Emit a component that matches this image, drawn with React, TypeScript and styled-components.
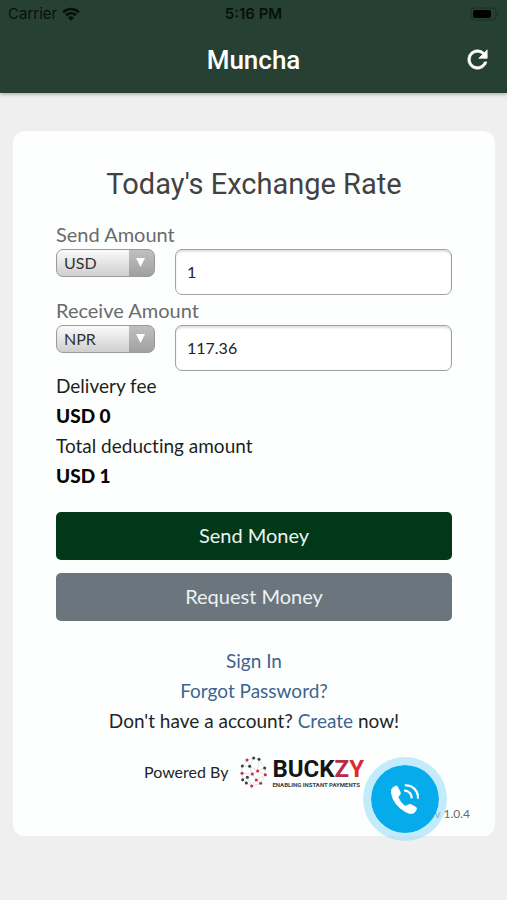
import React, { useState } from "react";
import styled, { createGlobalStyle } from "styled-components";

const GlobalStyle = createGlobalStyle`
  *, *::before, *::after { box-sizing: border-box; }
  body {
    margin: 0;
    background: #efeff0;
    font-family: Lato, "Open Sans", sans-serif;
    font-variant-ligatures: none;
    color: #212529;
  }
  button, input, select { font-family: inherit; }
`;

const Header = styled.header`
  background: #264133;
  box-shadow: 0 1px 4px rgba(0, 0, 0, 0.35);
`;

const StatusBar = styled.div`
  display: grid;
  grid-template-columns: 1fr auto 1fr;
  align-items: center;
  height: 28px;
  padding: 0 8px;
  color: #07100b;
  font: 500 15px/28px Inter, sans-serif;
`;

const Carrier = styled.span`
  display: flex;
  align-items: center;
  gap: 5px;
  font-weight: 400;
`;

const Clock = styled.time`
  font-weight: 600;
`;

const BatteryIcon = styled.svg`
  justify-self: end;
`;

const TitleBar = styled.div`
  display: grid;
  grid-template-columns: 1fr auto 1fr;
  align-items: center;
  height: 65px;
  padding: 0 15px 2px;
`;

const AppTitle = styled.h1`
  grid-column: 2;
  margin: 0;
  color: #fff;
  font: 500 26px/32px Roboto, sans-serif;
`;

const IconButton = styled.button`
  justify-self: end;
  display: flex;
  padding: 0;
  border: 0;
  background: none;
  color: #fff;
  cursor: pointer;
`;

const Card = styled.main`
  margin: 38px 12px 0 13px;
  padding: 33px 43px 13px;
  border-radius: 12px;
  background: #fdfffe;
`;

const Heading = styled.h2`
  margin: 0 0 17px;
  color: #424244;
  text-align: center;
  font: 400 29px/40px Roboto, sans-serif;
`;

const Fields = styled.div`
  display: grid;
  gap: 2px;
`;

const Field = styled.div`
  display: grid;
  grid-template-columns: 99px 1fr;
  gap: 2px 20px;
  align-items: start;
`;

const FieldLabel = styled.label`
  grid-column: 1 / -1;
  color: #6a6b6d;
  font-size: 20px;
  line-height: 26px;
`;

const SelectWrap = styled.div`
  position: relative;
`;

const Select = styled.select`
  display: block;
  width: 100%;
  height: 28px;
  padding: 0 34px 2px 7px;
  appearance: none;
  border: 1px solid #999b9b;
  border-radius: 7px;
  background:
    linear-gradient(#c0c0c1, #a0a0a2) right / 25px 100% no-repeat,
    linear-gradient(#fafafa, #cfcfcf);
  color: #333;
  font-size: 16px;
`;

const SelectArrow = styled.svg`
  position: absolute;
  top: 9px;
  right: 10px;
  pointer-events: none;
`;

const AmountInput = styled.input`
  width: 100%;
  height: 46px;
  padding: 0 11px 2px;
  border: 1px solid #a0a2a2;
  border-radius: 7px;
  background: #fff;
  box-shadow: inset 0 2px 2px rgba(0, 0, 0, 0.12);
  color: #222;
  font-size: 16px;
`;

const Summary = styled.dl`
  margin: 0 0 21px;
  font-size: 19px;
  line-height: 30px;
`;

const Term = styled.dt`
  color: #1d1f20;
`;

const Amount = styled.dd`
  margin: 0;
  color: #050505;
  font-weight: 900;
`;

const Actions = styled.div`
  display: grid;
  gap: 13px;
`;

const ActionButton = styled.button<{ $tone: "primary" | "secondary" }>`
  height: 48px;
  padding: 0 16px 2px;
  border: 0;
  border-radius: 5px;
  background: ${({ $tone }) => ($tone === "primary" ? "#003818" : "#6b757e")};
  color: #eef2f0;
  font-size: 20px;
  cursor: pointer;
`;

const Links = styled.nav`
  display: grid;
  justify-items: center;
  margin-top: 25px;
  font-size: 19px;
  line-height: 30px;
`;

const Link = styled.a`
  color: #3e6491;
  text-decoration: none;
`;

const Prompt = styled.p`
  margin: 0;
`;

const PoweredBy = styled.footer`
  display: flex;
  align-items: center;
  justify-content: center;
  gap: 12px;
  margin-top: 19px;
  font-size: 16px;
  line-height: 30px;
`;

const Brand = styled.span`
  display: flex;
  align-items: center;
  gap: 5px;
`;

const BrandText = styled.span`
  display: grid;
`;

const BrandName = styled.span`
  color: #151517;
  font: 700 24px/26px Roboto, sans-serif;
`;

const BrandLetter = styled.span<{ $color: string }>`
  color: ${({ $color }) => $color};
`;

const Tagline = styled.span`
  color: #3c3c3e;
  font: 700 6px/6px Roboto, sans-serif;
`;

const Version = styled.p`
  margin: 17px -18px 0 0;
  color: #66686a;
  text-align: right;
  font-size: 12px;
  line-height: 18px;
`;

const CallButton = styled.button`
  position: fixed;
  right: 60px;
  bottom: 59px;
  display: grid;
  place-items: center;
  width: 84px;
  height: 84px;
  border: 8px solid rgba(158, 225, 249, 0.62);
  border-radius: 50%;
  background: #05abeb;
  background-clip: padding-box;
  cursor: pointer;
`;

const dots: [number, number, string][] = [
  [41, 11, "#343d4c"], [57, 15, "#343d4c"], [21, 17, "#bb3150"],
  [7, 35, "#343d4c"], [29, 36, "#343d4c"], [74, 41, "#343d4c"],
  [53, 50, "#c92f46"], [76, 61, "#bb3150"], [6, 57, "#bb3150"],
  [37, 59, "#c92f46"], [22, 69, "#343d4c"], [8, 76, "#343d4c"],
  [49, 77, "#c92f46"], [19, 86, "#343d4c"], [62, 87, "#bb3150"],
  [35, 95, "#c92f46"],
];

function BuckzyMark() {
  return (
    <svg width="27" height="33" viewBox="0 2 81 99" aria-hidden="true">
      <path
        d="M41 11 21 17 7 35 6 57 8 76 19 86 35 95 62 87 76 61 74 41 57 15 41 11 29 36 53 50 74 41M21 17 29 36 7 35M29 36 37 59 53 50 57 15M6 57 37 59 22 69 8 76M37 59 49 77 76 61 53 50M49 77 62 87M49 77 35 95 22 69 19 86"
        fill="none"
        stroke="#d3d5d7"
        strokeWidth="2"
      />
      {dots.map(([x, y, color]) => (
        <circle key={`${x}-${y}`} cx={x} cy={y} r="4.5" fill={color} />
      ))}
    </svg>
  );
}

interface AmountFieldProps {
  id: string;
  label: string;
  currency: string;
  value: string;
  onChange: (value: string) => void;
}

function AmountField({ id, label, currency, value, onChange }: AmountFieldProps) {
  return (
    <Field>
      <FieldLabel htmlFor={id}>{label}</FieldLabel>
      <SelectWrap>
        <Select aria-label={`${label} currency`} defaultValue={currency}>
          <option>USD</option>
          <option>NPR</option>
        </Select>
        <SelectArrow width="9" height="9" viewBox="0 0 9 9" aria-hidden="true">
          <path d="M0 0h9L4.500 9z" fill="#fff" />
        </SelectArrow>
      </SelectWrap>
      <AmountInput
        id={id}
        inputMode="decimal"
        value={value}
        onChange={(e) => onChange(e.target.value)}
      />
    </Field>
  );
}

export default function App() {
  const [send, setSend] = useState("1");
  const [receive, setReceive] = useState("117.36");

  return (
    <>
      <GlobalStyle />
      <Header>
        <StatusBar>
          <Carrier>
            Carrier
            <svg width="18" height="14" viewBox="0 0 18 14" aria-hidden="true">
              <path d="M1.200 5.200a11.200 11.200 0 0 1 15.600 0M4 8.300a7.200 7.200 0 0 1 10 0" fill="none" stroke="currentColor" strokeWidth="2.600" />
              <path d="M9 13.800 5.900 10.600a4.500 4.500 0 0 1 6.200 0z" fill="currentColor" />
            </svg>
          </Carrier>
          <Clock>5:16 PM</Clock>
          <BatteryIcon width="29" height="14" viewBox="0 0 29 14" aria-hidden="true">
            <rect x="1" y="1" width="25" height="12" rx="3.500" fill="none" stroke="#1a2e24" />
            <rect x="3" y="3" width="18" height="8" rx="2" fill="#000" />
            <path d="M27 5c1.600.8 1.600 3.200 0 4z" fill="#1a2e24" />
          </BatteryIcon>
        </StatusBar>
        <TitleBar>
          <AppTitle>Muncha</AppTitle>
          <IconButton aria-label="Refresh">
            <svg width="29" height="29" viewBox="0 0 24 24" aria-hidden="true">
              <path
                d="M17.650 6.350A7.960 7.960 0 0 0 12 4a8 8 0 1 0 7.730 10h-2.080A6 6 0 1 1 12 6c1.660 0 3.140.69 4.220 1.780L13 11h7V4z"
                fill="currentColor"
                stroke="currentColor"
                strokeWidth="0.600"
              />
            </svg>
          </IconButton>
        </TitleBar>
      </Header>

      <Card>
        <Heading>Today's Exchange Rate</Heading>
        <Fields>
          <AmountField id="send" label="Send Amount" currency="USD" value={send} onChange={setSend} />
          <AmountField id="receive" label="Receive Amount" currency="NPR" value={receive} onChange={setReceive} />
        </Fields>

        <Summary>
          <Term>Delivery fee</Term>
          <Amount>USD 0</Amount>
          <Term>Total deducting amount</Term>
          <Amount>USD 1</Amount>
        </Summary>

        <Actions>
          <ActionButton $tone="primary">Send Money</ActionButton>
          <ActionButton $tone="secondary">Request Money</ActionButton>
        </Actions>

        <Links>
          <Link href="#sign-in">Sign In</Link>
          <Link href="#forgot">Forgot Password?</Link>
          <Prompt>
            Don't have a account? <Link href="#create">Create</Link> now!
          </Prompt>
        </Links>

        <PoweredBy>
          Powered By
          <Brand>
            <BuckzyMark />
            <BrandText>
              <BrandName>
                BUCK<BrandLetter $color="#b72a4c">Z</BrandLetter>
                <BrandLetter $color="#e3272b">Y</BrandLetter>
              </BrandName>
              <Tagline>ENABLING INSTANT PAYMENTS</Tagline>
            </BrandText>
          </Brand>
        </PoweredBy>
        <Version>v 1.0.4</Version>
      </Card>

      <CallButton aria-label="Call support">
        <svg width="28" height="30" viewBox="0 0 84 90" aria-hidden="true">
          <path
            d="M1 27V18Q3 10 14 6Q19 5 20 9L28 25Q29 29 26 33L21 39Q27 56 43 67L53 62Q57 60 61 62L74 69Q78 72 76 77Q72 86 66 88Q56 91 43 83Q7 63 1 27Z"
            fill="#fff"
            stroke="#fff"
            strokeWidth="2"
            strokeLinejoin="round"
          />
          <path d="M44 4A36 36 0 0 1 81 41M42 20A21 21 0 0 1 62 40" fill="none" stroke="#fff" strokeWidth="7" strokeLinecap="round" />
        </svg>
      </CallButton>
    </>
  );
}
